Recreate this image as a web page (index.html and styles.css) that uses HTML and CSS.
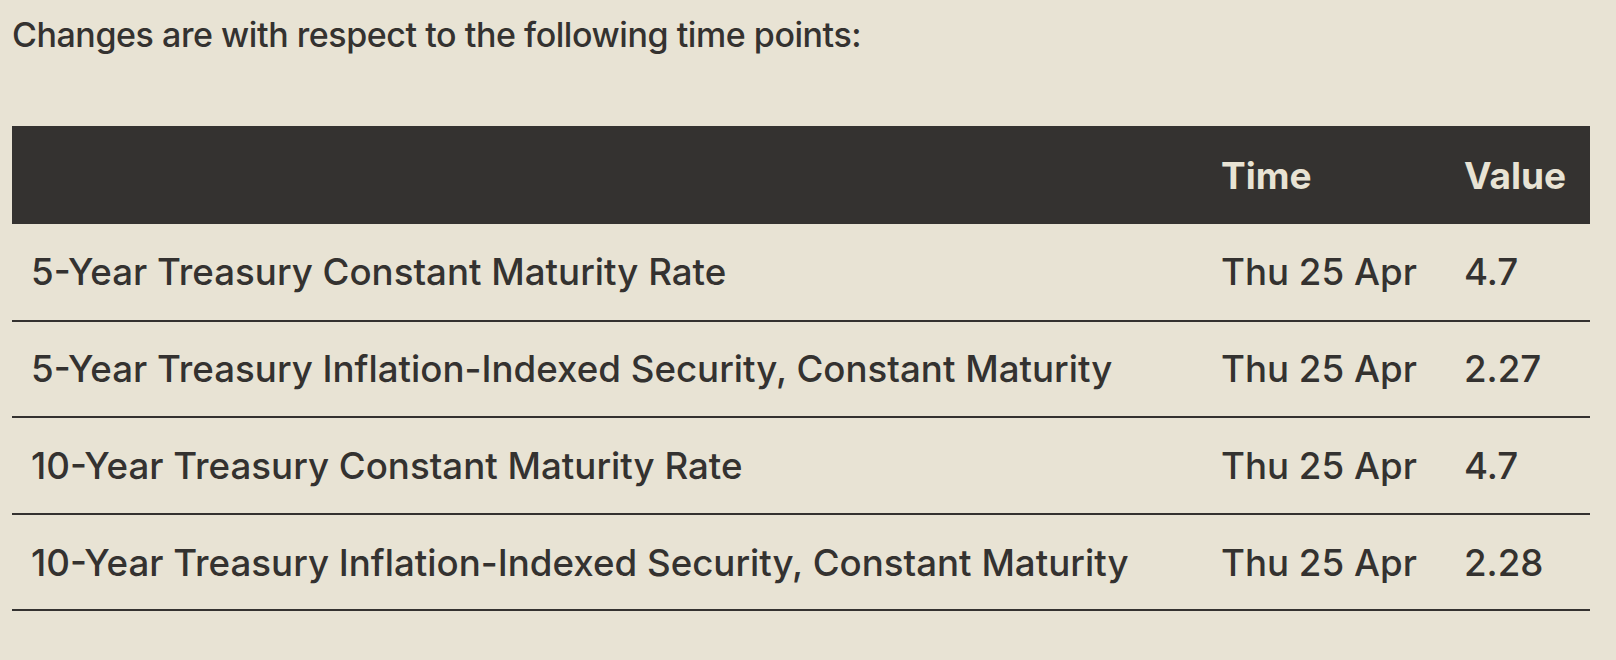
FILE: index.html
```html
<!DOCTYPE html>
<html lang="en">
<head>
<meta charset="utf-8">
<title>Time points</title>
<link rel="stylesheet" href="styles.css">
</head>
<body>
<main class="page">
  <p class="intro">Changes are with respect to the following time points:</p>
  <table class="points">
    <thead>
      <tr>
        <th class="col-name"></th>
        <th class="col-time">Time</th>
        <th class="col-value">Value</th>
      </tr>
    </thead>
    <tbody>
      <tr>
        <td class="col-name">5-Year Treasury Constant Maturity Rate</td>
        <td class="col-time">Thu 25 Apr</td>
        <td class="col-value">4.7</td>
      </tr>
      <tr>
        <td class="col-name">5-Year Treasury Inflation-Indexed Security, Constant Maturity</td>
        <td class="col-time">Thu 25 Apr</td>
        <td class="col-value">2.27</td>
      </tr>
      <tr>
        <td class="col-name">10-Year Treasury Constant Maturity Rate</td>
        <td class="col-time">Thu 25 Apr</td>
        <td class="col-value">4.7</td>
      </tr>
      <tr>
        <td class="col-name">10-Year Treasury Inflation-Indexed Security, Constant Maturity</td>
        <td class="col-time">Thu 25 Apr</td>
        <td class="col-value">2.28</td>
      </tr>
    </tbody>
  </table>
</main>
</body>
</html>
```

FILE: styles.css
```css
* {
  box-sizing: border-box;
}

html, body {
  margin: 0;
  padding: 0;
  background: #e8e3d4;
  color: #343230;
  font-family: "Inter", "Noto Sans", sans-serif;
}

.page {
  padding: 12px 26px 0 12px;
}

.intro {
  margin: 0;
  font-size: 34px;
  line-height: 46px;
  font-weight: 500;
  letter-spacing: -0.013em;
  height: 114px;
}

.points {
  width: 100%;
  border-collapse: collapse;
  table-layout: fixed;
}

.points th {
  background: #343230;
  color: #e8e3d4;
  font-weight: 700;
  font-size: 37px;
  height: 98px;
  text-align: left;
  padding: 0 25px 0 24px;
}

.points td {
  font-size: 36.7px;
  font-weight: 500;
  height: 96.6px;
  padding: 0 25px 0 24px;
  border-bottom: 2px solid #343230;
  white-space: nowrap;
}

.points .col-name {
  padding-left: 19px;
}

.points .col-time {
  width: 243px;
}

.points .col-value {
  width: 150px;
}
```
